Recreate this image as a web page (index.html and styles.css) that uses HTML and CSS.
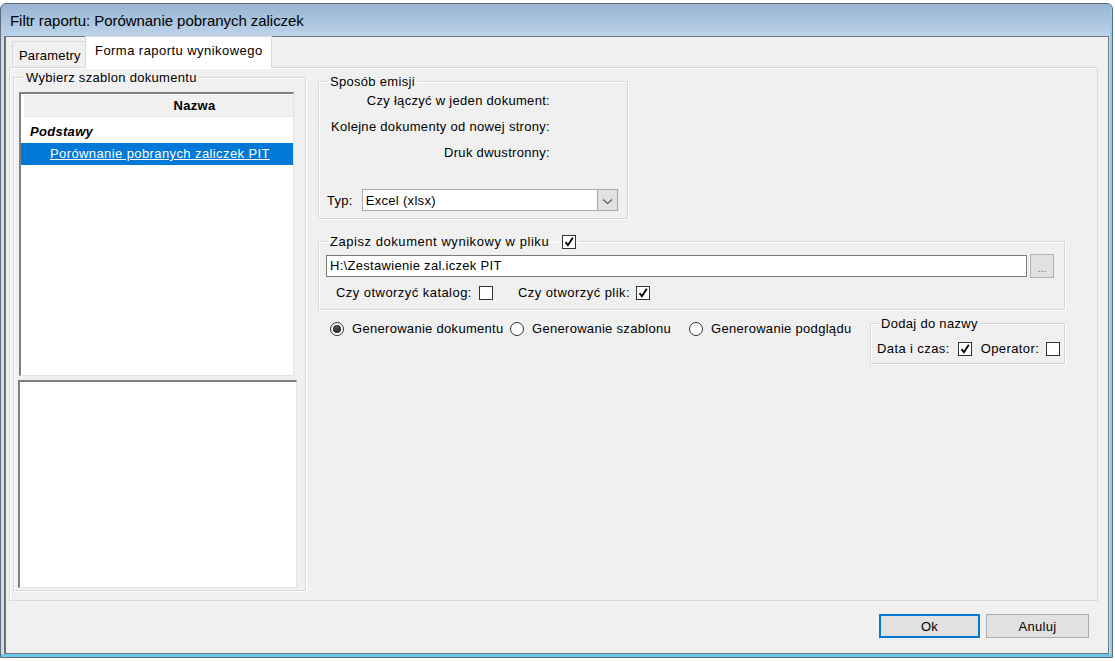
FILE: index.html
```html
<!DOCTYPE html>
<html lang="pl">
<head>
<meta charset="utf-8">
<title>Filtr raportu</title>
<link rel="stylesheet" href="styles.css">
</head>
<body>
<div class="window">
  <div class="titlebar">Filtr raportu: Porównanie pobranych zaliczek</div>
  <div class="client">
    <div class="tabs">
      <div class="tab">Parametry</div>
      <div class="tab active">Forma raportu wynikowego</div>
    </div>
    <div class="tabpanel">
      <fieldset class="group templates">
        <legend>Wybierz szablon dokumentu</legend>
        <div class="grid">
          <div class="grid-head">Nazwa</div>
          <div class="grid-group">Podstawy</div>
          <div class="grid-row selected"><span>Porównanie pobranych zaliczek PIT</span></div>
        </div>
        <div class="preview"></div>
      </fieldset>

      <div class="settings">
        <fieldset class="group emission">
          <legend>Sposób emisji</legend>
          <div class="opt-row">Czy łączyć w jeden dokument:</div>
          <div class="opt-row">Kolejne dokumenty od nowej strony:</div>
          <div class="opt-row">Druk dwustronny:</div>
          <div class="type-row">
            <span>Typ:</span>
            <div class="combo">
              <span class="combo-text">Excel (xlsx)</span>
              <span class="combo-btn">
                <svg width="11" height="7" viewBox="0 0 11 7"><path d="M1 1.5l4.5 4 4.5-4" fill="none" stroke="#5a5a5a" stroke-width="1.2"/></svg>
              </span>
            </div>
          </div>
        </fieldset>

        <fieldset class="group save">
          <legend><span class="save-title">Zapisz dokument wynikowy w pliku</span> <span class="check on"><svg viewBox="0 0 12 12"><path d="M2.5 6.2l2.4 3L9.8 1.8" fill="none" stroke="#000" stroke-width="1.9"/></svg></span></legend>
          <div class="path-row">
            <div class="path-input">H:\Zestawienie zal.iczek PIT</div>
            <div class="browse">...</div>
          </div>
          <div class="open-row">
            <span>Czy otworzyć katalog:</span>
            <span class="check"></span>
            <span class="open-file">Czy otworzyć plik:</span>
            <span class="check on"><svg viewBox="0 0 12 12"><path d="M2.5 6.2l2.4 3L9.8 1.8" fill="none" stroke="#000" stroke-width="1.9"/></svg></span>
          </div>
        </fieldset>

        <div class="bottom-row">
          <div class="radios">
            <label class="radio r-doc"><span class="dot on"></span>Generowanie dokumentu</label>
            <label class="radio r-tpl"><span class="dot"></span>Generowanie szablonu</label>
            <label class="radio r-prev"><span class="dot"></span>Generowanie podglądu</label>
          </div>
          <fieldset class="group name-add">
            <legend>Dodaj do nazwy</legend>
            <div class="name-row">
              <span>Data i czas:</span>
              <span class="check on"><svg viewBox="0 0 12 12"><path d="M2.5 6.2l2.4 3L9.8 1.8" fill="none" stroke="#000" stroke-width="1.9"/></svg></span>
              <span class="operator">Operator:</span>
              <span class="check"></span>
            </div>
          </fieldset>
        </div>
      </div>
    </div>
    <div class="footer">
      <button class="btn default">Ok</button>
      <button class="btn">Anuluj</button>
    </div>
  </div>
</div>
</body>
</html>
```

FILE: styles.css
```css
* { box-sizing: border-box; }

body {
  margin: 0;
  background: #fff;
  font-family: "Liberation Sans", Arial, sans-serif;
  font-size: 13px;
  letter-spacing: 0.3px;
  color: #000;
}

/* dialog frame */
.window {
  margin-top: 3px;
  width: 1113px;
  height: 655px;
  border: 1px solid #5f6b78;
  border-radius: 6px 6px 0 0;
  background: linear-gradient(to bottom, #98b3d2 0, #bdd3ea 32px, #cfdceb 40px, #cfdceb 100%);
  display: flex;
  flex-direction: column;
  padding: 0 3px 0 3px;
  box-shadow: inset 0 -3px 0 #6cc9e8, inset -2px 0 0 #8fcfe9;
}

.titlebar {
  height: 32px;
  flex: none;
  padding-left: 6px;
  display: flex;
  align-items: center;
  font-size: 15px;
  letter-spacing: -0.05px;
  color: #000;
}

.client {
  flex: 1;
  margin-bottom: 3px;
  background: #f0f0f0;
  border: 1px solid #6d7783;
  border-left: 2px solid #707070;
  display: flex;
  flex-direction: column;
}

/* tab strip */
.tabs {
  display: flex;
  align-items: flex-end;
  height: 30px;
  padding-left: 6px;
  position: relative;
  z-index: 1;
  letter-spacing: 0.45px;
}

.tab {
  height: 26px;
  width: 75px;
  padding: 1px 0 0 6px;
  display: flex;
  align-items: center;
  border: 1px solid #d9d9d9;
  border-bottom: none;
  background: #f0f0f0;
  letter-spacing: 0.2px;
}

.tab.active {
  height: 32px;
  margin-bottom: -1px;
  margin-left: -2px;
  padding: 0 0 4px 9px;
  background: #fff;
  width: 187px;
  letter-spacing: 0.45px;
}

.tabpanel {
  height: 534px;
  margin: 0 10px 0 3px;
  border: 1px solid #d9d9d9;
  box-shadow: inset 1px 1px 0 #fff;
  display: flex;
  padding-left: 3px;
  gap: 12px;
}

/* group boxes */
.group {
  margin: 0;
  padding: 0;
  border: 1px solid #d8d8d8;
  box-shadow: inset 1px 1px 0 #fff, 1px 1px 0 #fff;
  min-width: 0;
}

.group legend {
  padding: 0 2px;
  line-height: 15px;
  height: 15px;
}

.templates {
  margin-top: 2px;
  width: 293px;
  height: 521px;
  padding: 7px 0 0 5px;
}

.templates legend { margin-left: 5px; }

.grid {
  width: 275px;
  height: 284px;
  background: #fff;
  border-top: 2px solid #7f7f7f;
  border-left: 2px solid #7f7f7f;
  border-right: 1px solid #e3e3e3;
  border-bottom: 1px solid #e3e3e3;
  padding-top: 1px;
}

.grid-head {
  height: 22px;
  margin-left: 3px;
  background: #f1f1f1;
  border-bottom: 1px solid #e2e2e2;
  font-weight: bold;
  text-align: center;
  padding-left: 72px;
  line-height: 22px;
}

.grid-group {
  height: 26px;
  line-height: 29px;
  padding-left: 9px;
  font-weight: bold;
  font-style: italic;
}

.grid-row {
  height: 22px;
  line-height: 22px;
  padding-left: 29px;
  letter-spacing: 0.4px;
}

.grid-row.selected {
  background: #0078d7;
  color: #fff;
}

.grid-row.selected span { text-decoration: underline; }

.preview {
  margin: 4px 0 0 -1px;
  width: 279px;
  height: 208px;
  background: #fff;
  border-top: 2px solid #7f7f7f;
  border-left: 2px solid #7f7f7f;
  border-right: 1px solid #e3e3e3;
  border-bottom: 1px solid #e3e3e3;
}

/* right side */
.settings {
  display: flex;
  flex-direction: column;
}

.emission {
  margin-top: 6px;
  width: 310px;
  height: 145px;
}

.emission legend { margin-left: 9px; }

.opt-row {
  width: 231px;
  height: 26px;
  line-height: 26px;
  text-align: right;
}

.opt-row:first-of-type { margin-top: -1px; }

.type-row {
  display: flex;
  align-items: center;
  margin-top: 23px;
  padding-left: 8px;
  gap: 9px;
}

.combo {
  width: 256px;
  height: 22px;
  background: #fff;
  border: 1px solid #a9a9a9;
  display: flex;
  align-items: center;
}

.combo-text {
  flex: 1;
  padding-left: 3px;
}

.combo-btn {
  width: 21px;
  height: 22px;
  margin: -1px -1px -1px 0;
  background: #e2e2e2;
  border: 1px solid #a6a6a6;
  display: flex;
  align-items: center;
  justify-content: center;
  padding-top: 2px;
}

.save {
  margin-top: 14px;
  width: 747px;
  height: 77px;
  padding: 4px 0 0 7px;
}

.save legend {
  margin-left: 2px;
  display: flex;
  align-items: center;
  gap: 13px;
  height: 17px;
  line-height: 17px;
}

.save-title { letter-spacing: 0.55px; }

.check {
  display: inline-block;
  width: 14px;
  height: 14px;
  border: 1px solid #333;
  background: #fff;
  flex: none;
}

.check svg { display: block; width: 12px; height: 12px; }

.path-row {
  display: flex;
  align-items: center;
  gap: 3px;
}

.path-input {
  width: 701px;
  height: 22px;
  line-height: 20px;
  background: #fff;
  border: 1px solid #7a7a7a;
  padding-left: 3px;
}

.browse {
  width: 24px;
  height: 24px;
  background: #e1e1e1;
  border: 1px solid #b3b3b3;
  color: #707070;
  font-size: 11px;
  text-align: center;
  line-height: 26px;
  letter-spacing: 0;
}

.open-row {
  display: flex;
  align-items: center;
  margin-top: 6px;
  padding-left: 10px;
  height: 17px;
  letter-spacing: 0.45px;
}

.open-row .check { margin-left: 7px; }
.open-row .open-file { margin-left: 25px; }
.open-row .open-file + .check { margin-left: 6px; }

.bottom-row {
  display: flex;
  align-items: flex-start;
}

.radios {
  display: flex;
  margin-top: 10px;
  padding-left: 12px;
}

.radio {
  display: flex;
  align-items: center;
  gap: 8px;
  height: 17px;
}

.r-doc { width: 180px; }
.r-tpl { width: 179px; }
.r-prev { width: 169px; }

.dot {
  width: 14px;
  height: 14px;
  border-radius: 50%;
  border: 1px solid #333;
  background: #fff;
  display: flex;
  align-items: center;
  justify-content: center;
  flex: none;
}

.dot.on::after {
  content: "";
  width: 8px;
  height: 8px;
  border-radius: 50%;
  background: radial-gradient(circle at 40% 35%, #555, #111);
}

.name-add {
  margin-top: 6px;
  margin-left: auto;
  width: 195px;
  height: 48px;
  padding: 9px 0 0 6px;
}

.name-add legend { margin-left: 2px; }

.name-row {
  display: flex;
  align-items: center;
  height: 17px;
  letter-spacing: 0.4px;
}

.name-row .check { margin-left: 8px; }
.name-row .operator { margin-left: 9px; }
.name-row .operator + .check { margin-left: 7px; }

/* dialog buttons */
.footer {
  flex: 1;
  display: flex;
  justify-content: flex-end;
  align-items: flex-start;
  padding: 13px 19px 0 0;
  gap: 6px;
}

.btn {
  font-family: inherit;
  font-size: 13px;
  letter-spacing: 0.3px;
  height: 24px;
  width: 103px;
  background: #e1e1e1;
  border: 1px solid #adadad;
  color: #000;
  padding: 0;
}

.btn.default {
  width: 101px;
  border: 2px solid #0078d7;
}
```
